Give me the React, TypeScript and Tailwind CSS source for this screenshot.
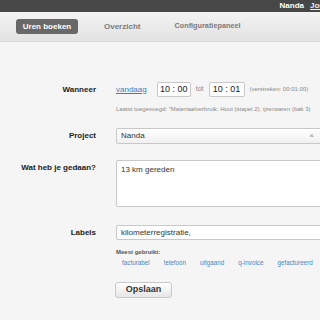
import React from "react";

export default function App() {
  return (
    <div className="w-[320px] h-[320px] overflow-hidden bg-[#f5f5f5] font-['Liberation_Sans',Arial,sans-serif]">
      {/* top bar */}
      <div className="h-[12px] bg-[#474747] flex items-center justify-end gap-[6px] whitespace-nowrap overflow-hidden">
        <span className="text-[8px] font-bold text-white leading-none">Nanda</span>
        <span className="text-[8px] font-bold text-[#eee] underline leading-none w-[10px] overflow-hidden">Jou</span>
      </div>
      {/* nav */}
      <div className="h-[30px] bg-gradient-to-b from-[#f3f3f3] to-[#e2e2e2] border-b border-[#d8d8d8] flex items-center pl-[16px] whitespace-nowrap">
        <div className="w-[62px] h-[15px] rounded-[3px] bg-[#686868] text-white font-bold text-[8px] flex items-center justify-center shrink-0">
          Uren boeken
        </div>
        <span className="ml-[26px] text-[8px] font-bold text-[#7a7a7a]">Overzicht</span>
        <span className="ml-[34px] text-[7.3px] font-bold text-[#7a7a7a]">Configuratiepaneel</span>
      </div>

      <div className="pt-[40px] whitespace-nowrap">
        {/* Wanneer */}
        <div className="flex items-center h-[15px]">
          <div className="w-[96px] shrink-0 text-right text-[8px] font-bold text-[#222]">Wanneer</div>
          <div className="ml-[20px] flex items-center shrink-0">
            <span className="text-[8px] text-[#3a7fc4] underline">vandaag</span>
            <div className="ml-[10px] w-[34px] h-[15px] bg-white border border-[#c8c8c8] rounded-[2px] flex items-center justify-center text-[9px] text-[#222]">10 : 00</div>
            <span className="ml-[5px] text-[7px] text-[#888]">tot</span>
            <div className="ml-[5px] w-[36px] h-[15px] bg-white border border-[#c8c8c8] rounded-[2px] flex items-center justify-center text-[9px] text-[#222]">10 : 01</div>
            <span className="ml-[5px] text-[6px] text-[#888]">(verstreken: 00:01:00)</span>
          </div>
        </div>
        <div className="ml-[116px] mt-[8px] text-[6px] text-[#888] leading-[8px]">
          Laatst toegevoegd: "Materiaalverbruik: Hout (stapel 2), ijzerwaren (bak 3)
        </div>

        {/* Project */}
        <div className="flex items-center mt-[15px]">
          <div className="w-[96px] shrink-0 text-right text-[8px] font-bold text-[#222]">Project</div>
          <div className="ml-[20px] w-[220px] h-[16px] bg-gradient-to-b from-white to-[#f0f0f0] border border-[#c8c8c8] rounded-[2px] flex items-center justify-between pl-[4px] pr-[21px] shrink-0">
            <span className="text-[8px] text-[#333] leading-none">Nanda</span>
            <span className="text-[8px] text-[#888] leading-none">×</span>
          </div>
        </div>

        {/* Wat heb je gedaan */}
        <div className="flex items-start mt-[16px]">
          <div className="w-[96px] shrink-0 text-right text-[8px] font-bold text-[#222] pt-[2px] leading-[12px]">Wat heb je gedaan?</div>
          <div className="ml-[20px] w-[220px] h-[47px] bg-white border border-[#c8c8c8] rounded-[2px] pl-[4px] pt-[1px] shrink-0 leading-[10px]">
            <span className="text-[8px] text-[#333]">13 km gereden</span>
          </div>
        </div>

        {/* Labels */}
        <div className="flex items-center mt-[18px]">
          <div className="w-[96px] shrink-0 text-right text-[8px] font-bold text-[#222]">Labels</div>
          <div className="ml-[20px] w-[220px] h-[15px] bg-white border border-[#c8c8c8] rounded-[2px] flex items-center pl-[4px] shrink-0">
            <span className="text-[8px] text-[#333] leading-none">kilometerregistratie,</span>
          </div>
        </div>
        <div className="ml-[116px] mt-[8px] text-[6px] font-bold text-[#555] leading-[8px]">Meest gebruikt:</div>
        <div className="ml-[122px] mt-[3px] flex text-[6.3px] text-[#4a86c5] leading-[8px]">
          <span>facturabel</span>
          <span className="ml-[14px]">telefoon</span>
          <span className="ml-[14px]">uitgaand</span>
          <span className="ml-[14px]">q-invoice</span>
          <span className="ml-[14px]">gefactureerd</span>
        </div>

        {/* Opslaan */}
        <div className="ml-[115px] mt-[15px] w-[57px] h-[16px] bg-gradient-to-b from-white to-[#e6e6e6] border border-[#c8c8c8] rounded-[3px] flex items-center justify-center text-[9px] font-bold text-[#333]">
          Opslaan
        </div>
      </div>
    </div>
  );
}
